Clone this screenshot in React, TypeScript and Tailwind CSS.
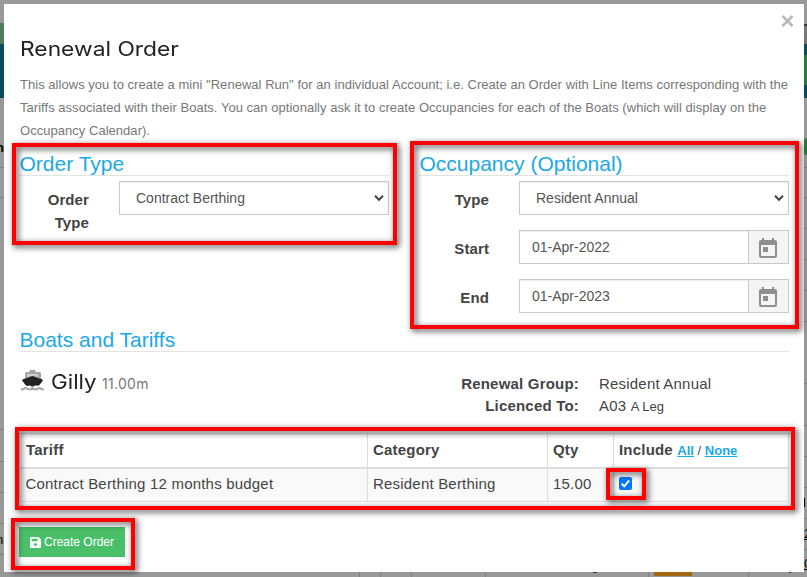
import React from "react";
import { MdToday } from "react-icons/md";

const field =
  "h-[34px] border border-[#c9c9c9] bg-white text-sm text-[#555] shadow-[inset_0_1px_1px_rgba(0,0,0,0.075)]";

function SectionHeading({ children }: { children: React.ReactNode }) {
  return (
    <h3 className="h-6 border-b border-[#e3e3e3] pl-[0.500px] text-[21px] leading-[24px] text-[#1ba8ea]">
      {children}
    </h3>
  );
}

function SelectBox({ value }: { value: string }) {
  return (
    <div className={`${field} flex w-[270px] shrink-0 items-center justify-between pl-4 pr-[3px]`}>
      <span className="pb-px">{value}</span>
      <svg width="12" height="8" viewBox="0 0 12 8" fill="none" stroke="#444" strokeWidth="2">
        <path d="M2 1.800 6 5.800 10 1.800" />
      </svg>
    </div>
  );
}

function DateBox({ value }: { value: string }) {
  return (
    <div className={`${field} flex w-[270px] shrink-0`}>
      <span className="flex-1 pl-3 leading-[33px]">{value}</span>
      <span className="flex w-10 items-center justify-center border-l border-[#c9c9c9] bg-[#f4f4f4] pr-[2px] pt-1 text-[#8e8e8e]">
        <MdToday size={24} />
      </span>
    </div>
  );
}

function Row({ label, children }: { label: string; children: React.ReactNode }) {
  return (
    <div className="flex h-[34px]">
      <label className="w-[70px] pt-[7px] text-right text-[15px] font-bold leading-[23px] tracking-[0.1px]">
        {label}
      </label>
      <div className="ml-[30px]">{children}</div>
    </div>
  );
}

function Callout({ className }: { className: string }) {
  return (
    <div
      className={`pointer-events-none absolute border-4 border-[#fe0000] drop-shadow-[2px_2px_3px_rgba(0,0,0,0.75)] ${className}`}
    />
  );
}

function Boat() {
  return (
    <svg className="ml-px mt-px" width="26" height="24" viewBox="0 0 26 24">
      <path
        fill="#a5a5a5"
        d="M9.500 1h6v2h4q1.500 0 1.500 1.500v5.300L12.700 7.200 5 9.800V4.500Q5 3 6.500 3h3zM7.500 5.500v2.200l5.200-1.500 5.300 1.500V5.500z"
      />
      <path fill="#d0d0d0" d="M7.500 5.500H18v2.200l-5.300-1.500-5.200 1.500z" />
      <path fill="#222" d="m12.500 7 9.500 3.300q1.500.7.500 1.700l-3 4q-2 1.500-4 .3-3 2.500-6 0-2 1.300-4-.3l-3-4q-1-1 .5-1.700z" />
      <path
        fill="none"
        stroke="#a5a5a5"
        strokeWidth="2"
        d="M1 20.500q2.500.2 4.500-1.700 2.300 1.700 4 1.700 1.700 0 3-1.700 1.500 1.700 3.200 1.700 1.800 0 3.800-1.700 2 1.900 4.500 1.700"
      />
    </svg>
  );
}

function Backdrop() {
  return (
    <>
      <div className="absolute left-0 top-[23px] h-[21px] w-1 bg-[#507a5c]" />
      <div className="absolute left-0 top-11 h-[54px] w-1 bg-[#084a60]" />
      <div className="absolute left-0 top-[142px] w-1 overflow-hidden text-[13px] font-bold leading-3 text-black">
        <span className="-ml-1">n</span>
      </div>
      <div className="absolute left-0 top-[534px] w-1 overflow-hidden text-[13px] leading-3 text-black">
        <span className="-ml-1">n</span>
      </div>
      <div className="absolute left-[804px] top-6 h-5 w-[3px] border-t-2 border-[#333] bg-[#777]" />
      <div className="absolute left-[804px] top-11 h-[54px] w-[3px] bg-[#084a60]" />
      <div className="absolute left-[804px] top-[55px] h-[30px] w-[3px] bg-[#287d3a]" />
      <div className="absolute left-[804px] top-[138px] h-[17px] w-[3px] rounded-l-full bg-[#287d3a]" />
      {[167, 197, 228, 259, 290, 321, 383, 425, 456, 487, 518, 549].map((y) => (
        <div key={y} className="absolute left-[804px] h-px w-[3px] bg-[#7f7f7f]" style={{ top: y }} />
      ))}
      {[167, 197, 429, 461, 492, 523, 554].map((y) => (
        <div key={y} className="absolute left-0 h-px w-1 bg-[#7f7f7f]" style={{ top: y }} />
      ))}
      <div className="absolute left-[804px] top-[498px] h-[9px] w-px bg-black" />
      <div className="absolute left-[804px] top-[528px] w-[3px] overflow-hidden text-[13px] leading-3 text-black underline">2</div>
      <div className="absolute left-[804px] top-[558px] w-[3px] overflow-hidden text-[13px] leading-3 text-black underline">0</div>
      {[359, 380, 411, 485, 648, 748].map((x) => (
        <div key={x} className="absolute top-[572px] h-[5px] w-px bg-[#7f7f7f]" style={{ left: x }} />
      ))}
      <div className="absolute left-[593px] top-[572px] h-px w-1 bg-[#084a60]" />
      <div className="absolute left-[654px] top-[572px] h-1 w-[38px] bg-[#a3670f]" />
      <div className="absolute left-[789px] top-[572px] h-px w-0.5 bg-[#333]" />
    </>
  );
}

export default function App() {
  return (
    <div
      className="relative h-[577px] w-[807px] overflow-hidden bg-[#999] p-1 text-[#444]"
      style={{ fontFamily: '"Liberation Sans", Arial, sans-serif' }}
    >
      <Backdrop />
      <div className="relative h-[568px] w-[800px] bg-white px-[15px]">
        <button className="absolute right-[10px] top-[10px] p-0" aria-label="Close">
          <svg width="13" height="14" viewBox="0 0 13 14" stroke="#b8b8b8" strokeWidth="2.500">
            <path d="m1.500 2 10 10M11.500 2l-10 10" />
          </svg>
        </button>

        <h2 className="ml-px origin-left scale-x-[1.14] pt-[31px] font-['Inter'] text-[20px] leading-[28px] text-[#222]">
          Renewal Order
        </h2>
        <p className="ml-px mt-[10px] whitespace-nowrap text-[13px] leading-[23px] tracking-[0.033px] text-[#777]">
          This allows you to create a mini "Renewal Run" for an individual Account; i.e. Create an Order with Line Items corresponding with the
          <br />
          Tariffs associated with their Boats. You can optionally ask it to create Occupancies for each of the Boats (which will display on the
          <br />
          Occupancy Calendar).
        </p>

        <div className="mt-[10px] grid grid-cols-[370px_370px] gap-[30px]">
          <section>
            <SectionHeading>Order Type</SectionHeading>
            <div className="mt-[5px]">
              <Row label="Order Type">
                <SelectBox value="Contract Berthing" />
              </Row>
            </div>
          </section>
          <section>
            <SectionHeading>Occupancy (Optional)</SectionHeading>
            <div className="mt-[5px] flex flex-col gap-[15px]">
              <Row label="Type">
                <SelectBox value="Resident Annual" />
              </Row>
              <Row label="Start">
                <DateBox value="01-Apr-2022" />
              </Row>
              <Row label="End">
                <DateBox value="01-Apr-2023" />
              </Row>
            </div>
          </section>
        </div>

        <div className="mt-[15px]">
          <SectionHeading>Boats and Tariffs</SectionHeading>
        </div>

        <div className="mt-4 flex h-[65px] justify-between">
          <div className="flex h-7 font-['Inter'] text-[#222]">
            <Boat />
            <span className="ml-[5px] w-[45px] origin-left scale-x-[1.120] text-[20px] leading-[28px]">Gilly</span>
            <span className="ml-[6px] text-[14px] leading-[32px] tracking-[0.300px] text-[#777]">11.00m</span>
          </div>
          <dl className="mt-[5px] grid h-11 w-[330px] grid-cols-[120px_190px] gap-x-5 text-[15px] leading-[22px] tracking-[0.2px]">
            <dt className="text-right font-bold">Renewal Group:</dt>
            <dd>Resident Annual</dd>
            <dt className="text-right font-bold">Licenced To:</dt>
            <dd>
              A03 <span className="text-[13px] tracking-normal">A Leg</span>
            </dd>
          </dl>
        </div>

        <table className="w-[770px] table-fixed border-collapse border border-[#ddd] text-[15px] tracking-[0.2px]">
          <colgroup>
            <col className="w-[348px]" />
            <col className="w-[180px]" />
            <col className="w-[66px]" />
            <col />
          </colgroup>
          <thead>
            <tr className="h-[34px] text-left">
              <th className="border border-b-2 border-[#ddd] px-[6px] py-0">Tariff</th>
              <th className="border border-b-2 border-[#ddd] px-[5px] py-0">Category</th>
              <th className="border border-b-2 border-[#ddd] px-[5px] py-0">Qty</th>
              <th className="border border-b-2 border-[#ddd] px-[5px] py-0">
                Include{" "}
                <span className="text-[13px] tracking-normal">
                  <a className="text-[#1ba8ea] underline">All</a> <span className="font-normal">/</span>{" "}
                  <a className="text-[#1ba8ea] underline">None</a>
                </span>
              </th>
            </tr>
          </thead>
          <tbody>
            <tr className="h-[34px] bg-[#f9f9f9]">
              <td className="border border-[#ddd] px-[5.500px] pb-[2px] pt-0">Contract Berthing 12 months budget</td>
              <td className="border border-[#ddd] px-[5px] pb-[2px] pt-0">Resident Berthing</td>
              <td className="border border-[#ddd] px-[5px] pb-[2px] pt-0">15.00</td>
              <td className="border border-[#ddd] px-[5px] pb-[2px] pt-0">
                <svg width="13" height="13" viewBox="0 0 13 13">
                  <rect width="13" height="13" rx="2" fill="#0075ff" />
                  <path d="m2.700 6.800 2.500 2.500 5-6" fill="none" stroke="#fff" strokeWidth="2" />
                </svg>
              </td>
            </tr>
          </tbody>
        </table>

        <button className="mt-[25px] flex h-[30px] w-[106px] items-center bg-[#4abf69] pl-[11px] text-xs text-white">
          <svg className="mr-[4px]" width="11" height="11" viewBox="0 0 11 11">
            <path
              fill="#fff"
              fillRule="evenodd"
              d="M1 0h7.500L11 2.500V10q0 1-1 1H1q-1 0-1-1V1q0-1 1-1zm.7 1.700v2.600h6V1.700zM5.500 6a1.500 1.500 0 1 0 0 3 1.500 1.500 0 0 0 0-3z"
            />
          </svg>
          <span className="-ml-px">Create Order</span>
        </button>
      </div>

      <Callout className="left-3 top-[143px] h-[102px] w-[385px]" />
      <Callout className="left-[410px] top-[141px] h-[188px] w-[389px]" />
      <Callout className="left-[15px] top-[427px] h-[83px] w-[780px]" />
      <Callout className="left-[606px] top-[468px] h-8 w-10" />
      <Callout className="left-[11px] top-[518px] h-[52px] w-[124px]" />
    </div>
  );
}
